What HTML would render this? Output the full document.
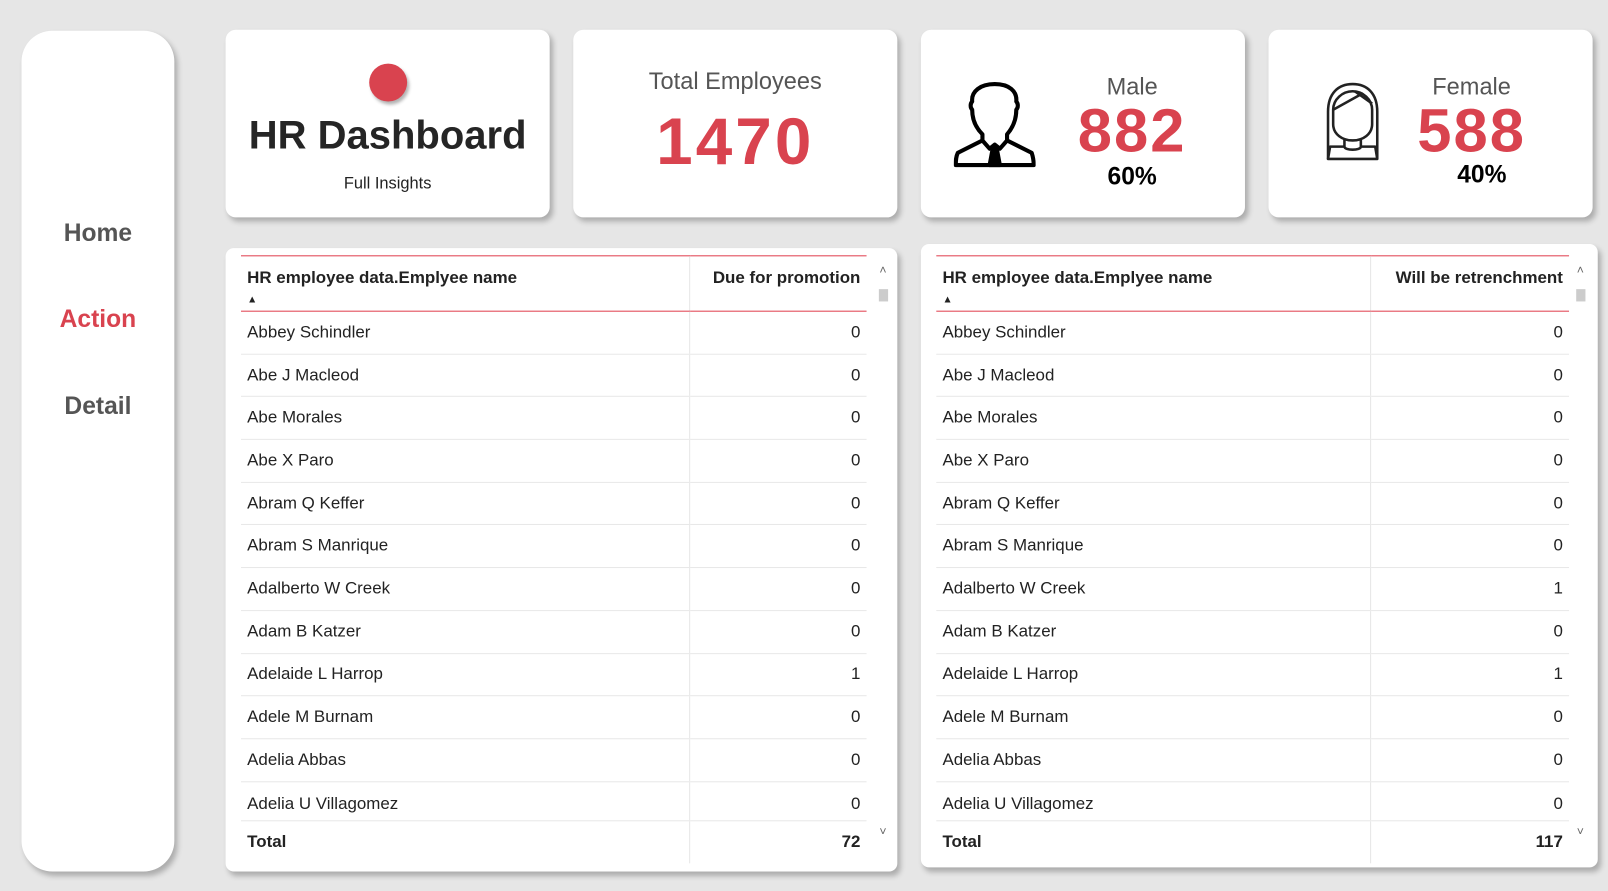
<!DOCTYPE html>
<html><head><meta charset="utf-8"><style>
*{margin:0;padding:0;box-sizing:border-box}
html,body{width:1608px;height:891px;overflow:hidden;background:#e6e6e6;font-family:"Liberation Sans",sans-serif}
#w{position:absolute;left:0;top:0;width:1568px;height:869px;transform:scale(1.02551,1.02532);transform-origin:0 0}
.box{position:absolute;background:#fff;box-shadow:3px 4px 5px rgba(0,0,0,.25)}
.nav{position:absolute;left:21px;width:149px;text-align:center;font-weight:bold;font-size:24px;color:#555}
.big{font-weight:bold;color:#d9434f;position:absolute;text-align:center}
table{position:absolute;border-collapse:collapse;font-size:16.5px;color:#222}
td,th{height:41.7px;padding:0 6px;border-bottom:1px solid #e8e8e8}
th{font-weight:bold;text-align:left;vertical-align:top;padding-top:12px;height:54px;border-top:1px solid #e04050;border-bottom:1px solid #e04050}
td.n,th.n{text-align:right;border-left:1px solid #e6e6e6}
tr.l td{height:38px;padding-top:6px}
tr.t td{font-weight:bold;border-top:1px solid #e04050;border-bottom:none;height:42px}
.sb{position:absolute;width:10px;color:#666;font-size:12px;text-align:center}
</style></head><body><div id="w">
<div class="box" style="left:21px;top:30px;width:149px;height:820px;border-radius:30px"></div>
<div class="nav" style="top:214px">Home</div>
<div class="nav" style="top:298px;color:#d9434f">Action</div>
<div class="nav" style="top:383px">Detail</div>

<div class="box" style="left:220px;top:29px;width:316px;height:183px;border-radius:10px">
 <div style="position:absolute;left:140px;top:33px;width:37px;height:37px;border-radius:50%;background:#d9434f;box-shadow:2px 3px 3px rgba(0,0,0,.3)"></div>
 <div style="position:absolute;left:0;width:316px;top:82px;text-align:center;font-weight:bold;font-size:39px;color:#252525">HR Dashboard</div>
 <div style="position:absolute;left:0;width:316px;top:142px;text-align:center;font-size:16px;color:#222">Full Insights</div>
</div>
<div class="box" style="left:559px;top:29px;width:316px;height:183px;border-radius:10px">
 <div style="position:absolute;left:0;width:316px;top:37px;text-align:center;font-size:23px;color:#555">Total Employees</div>
 <div class="big" style="left:0;width:316px;top:72px;font-size:64px;letter-spacing:3px">1470</div>
</div>
<div class="box" style="left:898px;top:29px;width:316px;height:183px;border-radius:10px">
 <svg style="position:absolute;left:32px;top:50px" width="80" height="86" viewBox="0 0 80 86" fill="none" stroke="#000" stroke-width="4" stroke-linejoin="round">
  <path d="M28 52 C20 44 18 36 18 28 C16 26 16 22 18 20 C17 10 26 3 40 3 C54 3 62 10 61 20 C63 22 63 26 61 28 C61 36 59 44 52 52 L52 58 L76 70 C78 76 78 80 78 82 L2 82 C2 78 2 74 4 70 L28 58 Z"/>
  <path d="M28 58 L35 66 L40 62 L45 66 L52 58"/>
  <path d="M38 66 L35 82 L45 82 L42 66 Z" fill="#000"/>
 </svg>
 <div style="position:absolute;left:150px;width:112px;top:42px;text-align:center;font-size:23px;color:#555">Male</div>
 <div class="big" style="left:146px;width:120px;top:64px;font-size:60px;letter-spacing:2px">882</div>
 <div style="position:absolute;left:150px;width:112px;top:130px;text-align:center;font-weight:bold;font-size:24px">60%</div>
</div>
<div class="box" style="left:1237px;top:29px;width:316px;height:183px;border-radius:10px">
 <svg style="position:absolute;left:54px;top:50px" width="56" height="80" viewBox="0 0 56 80" fill="none" stroke="#222" stroke-width="2.5" stroke-linejoin="round">
  <path d="M4 76 L4 30 C4 12 14 3 28 3 C42 3 52 12 52 30 L52 76"/>
  <path d="M9 28 C9 18 18 10 28 10 C38 10 47 18 47 28 L47 42 C47 52 38 58 28 58 C18 58 9 52 9 42 Z"/>
  <path d="M9 28 L38 12 M30 10 L47 22"/>
  <path d="M20 56 L20 64 C20 68 36 68 36 64 L36 56 M20 64 L6 64 L4 76 L52 76 L50 64 L36 64"/>
 </svg>
 <div style="position:absolute;left:140px;width:116px;top:42px;text-align:center;font-size:23px;color:#555">Female</div>
 <div class="big" style="left:136px;width:124px;top:64px;font-size:60px;letter-spacing:2px">588</div>
 <div style="position:absolute;left:150px;width:116px;top:128px;text-align:center;font-weight:bold;font-size:24px">40%</div>
</div>

<div class="box" style="left:220px;top:242px;width:655px;height:608px;border-radius:8px"></div>
<div class="box" style="left:898px;top:238px;width:660px;height:608px;border-radius:8px"></div>

<table style="left:235px;top:249px;width:610px">
<tr><th>HR employee data.Emplyee name<br><span style="font-size:10px">▲</span></th><th class="n" style="width:173px">Due for promotion</th></tr>
<tr><td>Abbey Schindler</td><td class="n">0</td></tr>
<tr><td>Abe J Macleod</td><td class="n">0</td></tr>
<tr><td>Abe Morales</td><td class="n">0</td></tr>
<tr><td>Abe X Paro</td><td class="n">0</td></tr>
<tr><td>Abram Q Keffer</td><td class="n">0</td></tr>
<tr><td>Abram S Manrique</td><td class="n">0</td></tr>
<tr><td>Adalberto W Creek</td><td class="n">0</td></tr>
<tr><td>Adam B Katzer</td><td class="n">0</td></tr>
<tr><td>Adelaide L Harrop</td><td class="n">1</td></tr>
<tr><td>Adele M Burnam</td><td class="n">0</td></tr>
<tr><td>Adelia Abbas</td><td class="n">0</td></tr>
<tr class="l"><td>Adelia U Villagomez</td><td class="n">0</td></tr>
<tr class="t"><td>Total</td><td class="n">72</td></tr>
</table>
<table style="left:913px;top:249px;width:617px">
<tr><th>HR employee data.Emplyee name<br><span style="font-size:10px">▲</span></th><th class="n" style="width:194px">Will be retrenchment</th></tr>
<tr><td>Abbey Schindler</td><td class="n">0</td></tr>
<tr><td>Abe J Macleod</td><td class="n">0</td></tr>
<tr><td>Abe Morales</td><td class="n">0</td></tr>
<tr><td>Abe X Paro</td><td class="n">0</td></tr>
<tr><td>Abram Q Keffer</td><td class="n">0</td></tr>
<tr><td>Abram S Manrique</td><td class="n">0</td></tr>
<tr><td>Adalberto W Creek</td><td class="n">1</td></tr>
<tr><td>Adam B Katzer</td><td class="n">0</td></tr>
<tr><td>Adelaide L Harrop</td><td class="n">1</td></tr>
<tr><td>Adele M Burnam</td><td class="n">0</td></tr>
<tr><td>Adelia Abbas</td><td class="n">0</td></tr>
<tr class="l"><td>Adelia U Villagomez</td><td class="n">0</td></tr>
<tr class="t"><td>Total</td><td class="n">117</td></tr>
</table>
<div class="sb" style="left:856px;top:256px">˄</div>
<div style="position:absolute;left:857px;top:282px;width:9px;height:12px;background:#ccc"></div>
<div class="sb" style="left:856px;top:804px">˅</div>
<div class="sb" style="left:1536px;top:256px">˄</div>
<div style="position:absolute;left:1537px;top:282px;width:9px;height:12px;background:#ccc"></div>
<div class="sb" style="left:1536px;top:804px">˅</div>
</div></body></html>
